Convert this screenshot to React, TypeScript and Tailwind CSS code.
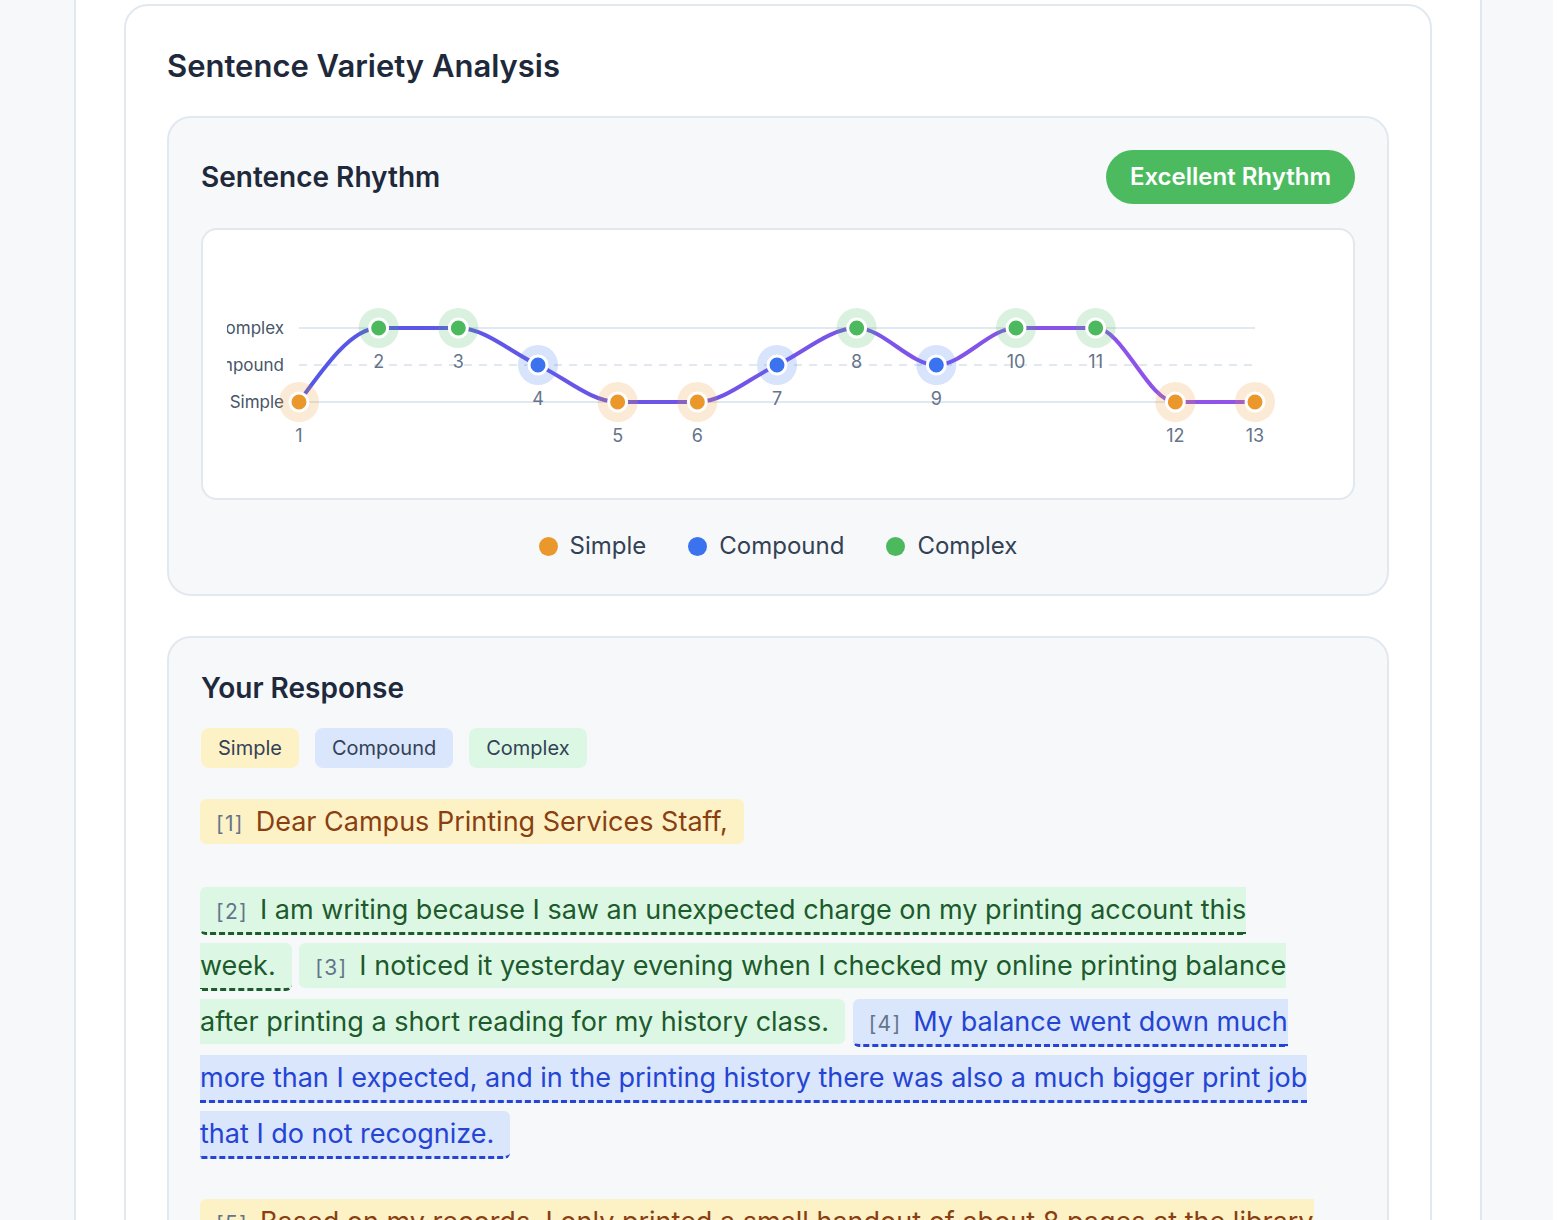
import React from 'react';

type Kind = 'simple' | 'compound' | 'complex';

const COLORS: Record<Kind, string> = {
  simple: '#ea982b',
  compound: '#3b72ee',
  complex: '#4cb95e',
};

const LEVEL: Record<Kind, number> = { complex: 74, compound: 111, simple: 148 };

const rhythm: Kind[] = [
  'simple', 'complex', 'complex', 'compound', 'simple', 'simple', 'compound',
  'complex', 'compound', 'complex', 'complex', 'simple', 'simple',
];

const X0 = 72;
const STEP = (1028 - 72) / 12;

// d3 curveMonotoneX, written out
function monotonePath(pts: { x: number; y: number }[]) {
  const n = pts.length;
  const sign = (v: number) => (v < 0 ? -1 : 1);
  const t: number[] = new Array(n).fill(0);
  for (let i = 1; i < n - 1; i++) {
    const h0 = pts[i].x - pts[i - 1].x;
    const h1 = pts[i + 1].x - pts[i].x;
    const s0 = (pts[i].y - pts[i - 1].y) / h0;
    const s1 = (pts[i + 1].y - pts[i].y) / h1;
    const p = (s0 * h1 + s1 * h0) / (h0 + h1);
    t[i] = (sign(s0) + sign(s1)) * Math.min(Math.abs(s0), Math.abs(s1), 0.5 * Math.abs(p)) || 0;
  }
  const hs = pts[1].x - pts[0].x;
  t[0] = (3 * (pts[1].y - pts[0].y) / hs - t[1]) / 2;
  const he = pts[n - 1].x - pts[n - 2].x;
  t[n - 1] = (3 * (pts[n - 1].y - pts[n - 2].y) / he - t[n - 2]) / 2;
  let d = `M${pts[0].x},${pts[0].y}`;
  for (let i = 0; i < n - 1; i++) {
    const dx = (pts[i + 1].x - pts[i].x) / 3;
    d += ` C${pts[i].x + dx},${pts[i].y + dx * t[i]} ${pts[i + 1].x - dx},${pts[i + 1].y - dx * t[i + 1]} ${pts[i + 1].x},${pts[i + 1].y}`;
  }
  return d;
}

function RhythmChart() {
  const pts = rhythm.map((k, i) => ({ x: X0 + i * STEP, y: LEVEL[k], k }));
  return (
    <svg viewBox="0 0 1102 220" className="block w-full h-[220px] overflow-hidden">
      <defs>
        <linearGradient id="rhythmLine" gradientUnits="userSpaceOnUse" x1="72" y1="0" x2="1028" y2="0">
          <stop offset="0%" stopColor="#5457e6" />
          <stop offset="100%" stopColor="#9552ea" />
        </linearGradient>
      </defs>
      <line x1="72" x2="1028" y1="74" y2="74" stroke="#e2e8f0" strokeWidth="2" />
      <line x1="72" x2="1028" y1="111" y2="111" stroke="#e2e8f0" strokeWidth="2" strokeDasharray="8 7" />
      <line x1="72" x2="1028" y1="148" y2="148" stroke="#e2e8f0" strokeWidth="2" />
      <g fontSize="17" fill="#475569" textAnchor="end" fontFamily="Inter, sans-serif">
        <text x="57" y="80">Complex</text>
        <text x="57" y="117">Compound</text>
        <text x="57" y="154">Simple</text>
      </g>
      <path d={monotonePath(pts)} fill="none" stroke="url(#rhythmLine)" strokeWidth="4" strokeLinecap="round" />
      {pts.map((p, i) => (
        <g key={i}>
          <circle cx={p.x} cy={p.y} r="20" fill={COLORS[p.k]} opacity="0.2" />
          <circle cx={p.x} cy={p.y} r="9" fill={COLORS[p.k]} stroke="#ffffff" strokeWidth="3" />
          <text x={p.x} y={p.y + 40} textAnchor="middle" fontSize="18" fill="#64748b" fontFamily="Inter, sans-serif">
            {i + 1}
          </text>
        </g>
      ))}
    </svg>
  );
}

function Sentence({ n, kind, dashed, children }: { n: number; kind: Kind; dashed?: boolean; children: React.ReactNode }) {
  const bg = kind === 'simple' ? 'bg-[#fdf2c6] text-[#8a3f12]' : kind === 'compound' ? 'bg-[#d9e6fb] text-[#2544d4]' : 'bg-[#dcf8e5] text-[#1d5a2c]';
  const border = dashed
    ? kind === 'compound'
      ? 'border-b-[3px] border-dashed border-[#2544d4]'
      : 'border-b-[3px] border-dashed border-[#1d5a2c]'
    : '';
  return (
    <span className={`${bg} ${border} rounded-md px-4 py-1.5`}>
      <span className="text-[21px] leading-none tracking-[0.06em] text-[#64748b] mr-3">[{n}]</span>
      {children}
    </span>
  );
}

export default function App() {
  return (
    <div className="min-h-screen bg-[#f7f8fa] flex font-['Inter',sans-serif]">
      <div className="w-[74px] shrink-0" />
      <div className="w-[1408px] shrink-0 bg-white border-x-2 border-[#e2e8f0] px-12 pt-1">
        <div className="border-2 border-[#e2e8f0] rounded-3xl bg-white px-[41px] pt-[42px] pb-10">
          <h1 className="text-[31px] font-semibold text-[#1e293b] leading-9 mb-8">Sentence Variety Analysis</h1>

          {/* Rhythm panel */}
          <section className="border-2 border-[#e2e8f0] rounded-3xl bg-[#f7f8fa] px-8 pt-8 pb-8">
            <div className="flex items-center justify-between h-[54px] mb-6">
              <h2 className="text-[28px] font-semibold text-[#1e293b]">Sentence Rhythm</h2>
              <span className="bg-[#4cbb5f] text-white text-[24px] font-semibold rounded-full h-[54px] px-6 flex items-center">
                Excellent Rhythm
              </span>
            </div>
            <div className="bg-white border-2 border-[#e2e8f0] rounded-2xl px-6 py-6">
              <RhythmChart />
            </div>
            <div className="flex justify-center items-center gap-[42px] mt-[30px] text-[24px] leading-8 text-[#334155]">
              {(['simple', 'compound', 'complex'] as Kind[]).map((k) => (
                <div key={k} className="flex items-center gap-3">
                  <span className="w-[19px] h-[19px] rounded-full" style={{ backgroundColor: COLORS[k] }} />
                  <span className="capitalize">{k}</span>
                </div>
              ))}
            </div>
          </section>

          {/* Response panel */}
          <section className="mt-10 border-2 border-[#e2e8f0] rounded-3xl bg-[#f7f8fa] px-8 pt-[30px] pb-8">
            <h2 className="text-[28px] font-semibold text-[#1e293b] leading-10 mb-5">Your Response</h2>
            <div className="flex gap-4 mb-[26px] text-[20px] text-[#334155]">
              <span className="bg-[#fdf2c6] rounded-lg px-[17px] h-10 flex items-center">Simple</span>
              <span className="bg-[#d9e6fb] rounded-lg px-[17px] h-10 flex items-center">Compound</span>
              <span className="bg-[#dcf8e5] rounded-lg px-[17px] h-10 flex items-center">Complex</span>
            </div>
            <div className="text-[27px] leading-[56px] -ml-px mr-[30px]">
              <p className="mb-8">
                <Sentence n={1} kind="simple">Dear Campus Printing Services Staff,</Sentence>
              </p>
              <p className="mb-8">
                <Sentence n={2} kind="complex" dashed>
                  I am writing because I saw an unexpected charge on my printing account this week.
                </Sentence>{' '}
                <Sentence n={3} kind="complex">
                  I noticed it yesterday evening when I checked my online printing balance after printing a short reading for my history class.
                </Sentence>{' '}
                <Sentence n={4} kind="compound" dashed>
                  My balance went down much more than I expected, and in the printing history there was also a much bigger print job that I do not recognize.
                </Sentence>
              </p>
              <p className="mb-8">
                <Sentence n={5} kind="simple">
                  Based on my records, I only printed a small handout of about 8 pages at the library on that day.
                </Sentence>
              </p>
            </div>
          </section>
        </div>
      </div>
      <div className="flex-1" />
      <div className="w-[9px] bg-white shrink-0" />
    </div>
  );
}
